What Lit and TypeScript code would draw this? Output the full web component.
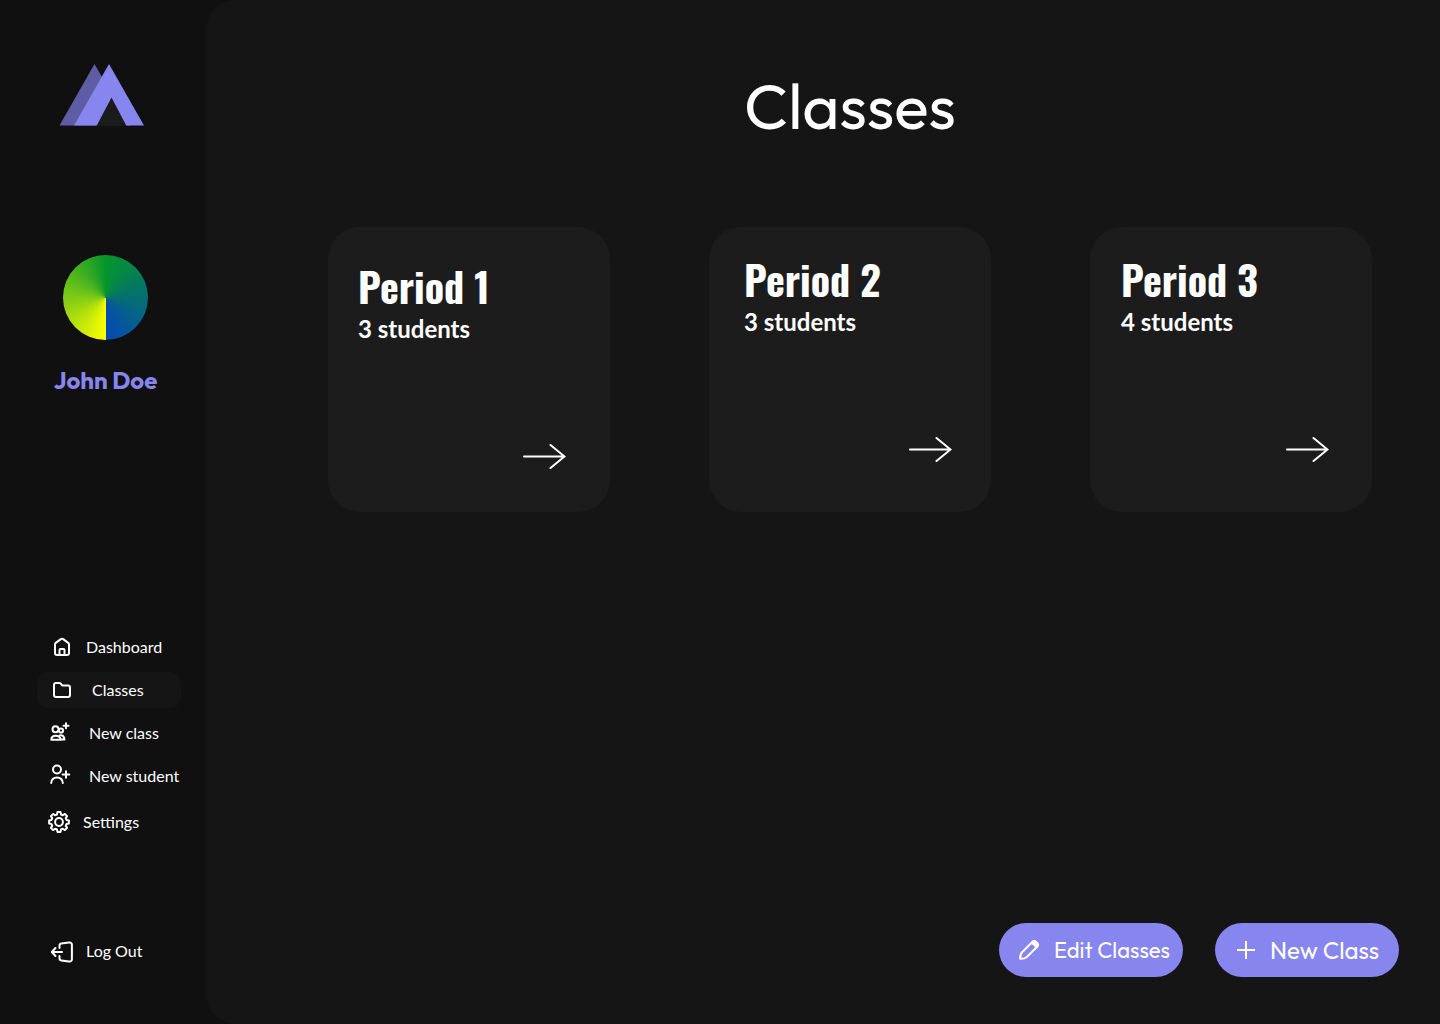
import { LitElement, html, svg, css, SVGTemplateResult } from "lit";
import { customElement, property } from "lit/decorators.js";
import { classMap } from "lit/directives/class-map.js";

/* Outline of an eight-toothed gear centred on (cx, cy). */
function gearPath(cx: number, cy: number, outer: number, inner: number): string {
  const points: string[] = [];
  const at = (deg: number, r: number) => {
    const a = (deg * Math.PI) / 180;
    return `${(cx + r * Math.sin(a)).toFixed(2)} ${(cy - r * Math.cos(a)).toFixed(2)}`;
  };
  for (let i = 0; i < 8; i++) {
    const mid = i * 45;
    points.push(at(mid - 15, inner), at(mid - 9, outer), at(mid + 9, outer), at(mid + 15, inner));
  }
  return `M${points.join("L")}Z`;
}

const icons: Record<string, SVGTemplateResult> = {
  home: svg`
    <path d="M7 10.500V19a2 2 0 0 0 2 2h10a2 2 0 0 0 2-2v-8.500q0-1-.8-1.600l-5-3.800a2 2 0 0 0-2.400 0L7.800 8.900Q7 9.500 7 10.500Z"/>
    <path d="M11.500 21v-5a1 1 0 0 1 1-1h3a1 1 0 0 1 1 1v5"/>`,
  folder: svg`
    <path d="M6 8a2 2 0 0 1 2-2h3.200a2 2 0 0 1 1.500.700l1.600 1.800h5.700a2 2 0 0 1 2 2V18a2 2 0 0 1-2 2H8a2 2 0 0 1-2-2Z"/>`,
  group: svg`
    <circle cx="7.500" cy="9.200" r="3"/>
    <circle cx="13" cy="10.500" r="2.100"/>
    <path d="M3.300 19.800q0-4 4.500-4t4.700 4Z"/>
    <path d="M11.800 15.400q4.200-.900 4.700 4.200h-3.500"/>
    <path d="M18 3.300v5M15.500 5.800h5"/>`,
  person: svg`
    <circle cx="9" cy="6.500" r="4"/>
    <path d="M3.200 20q.300-5.600 5.800-5.600t5.800 5.600"/>
    <path d="M18 8.300v6.400M14.600 11.500h6.600"/>`,
  gear: svg`
    <path d=${gearPath(11, 13, 10, 7.8)}/>
    <circle cx="11" cy="13" r="3.900"/>`,
  logout: svg`
    <path d="M11.500 10V7.700q0-1.900 1.800-2.100l7.600-1q3-.400 3 2.200v14.400q0 2.600-3 2.200l-7.600-1q-1.800-.200-1.800-2.100V18"/>
    <path d="M14 14H4M7.500 10l-3.700 4 3.700 4"/>`,
};

@customElement("nav-item")
class NavItem extends LitElement {
  @property() label = "";
  @property() icon = "home";
  @property() spacing = "normal";
  @property({ type: Boolean }) active = false;

  static styles = css`
    :host {
      display: block;
    }
    .item {
      display: flex;
      align-items: center;
      gap: 12px;
      height: 36px;
      padding-left: 11px;
      border-radius: 10px;
      color: #fff;
      font: 400 16px/20px Lato, sans-serif;
      text-decoration: none;
      white-space: nowrap;
    }
    .item.tight {
      gap: 9px;
    }
    .item.loose {
      gap: 15px;
    }
    .item.wide {
      gap: 18px;
    }
    .item.active {
      background: #151515;
    }
    .icon {
      flex: none;
      width: 26px;
      height: 26px;
      fill: none;
      stroke: #fff;
      stroke-width: 2;
      stroke-linecap: round;
      stroke-linejoin: round;
    }
  `;

  render() {
    const classes = { item: true, active: this.active, [this.spacing]: true };
    return html`
      <a class=${classMap(classes)} href="#" aria-current=${this.active ? "page" : "false"}>
        <svg class="icon" viewBox="0 0 26 26" aria-hidden="true">${icons[this.icon]}</svg>
        <span>${this.label}</span>
      </a>
    `;
  }
}

@customElement("class-card")
class ClassCard extends LitElement {
  @property() name = "";
  @property({ type: Number }) students = 0;
  @property() placement = "base";

  static styles = css`
    :host {
      display: block;
    }
    .card {
      box-sizing: border-box;
      display: flex;
      flex-direction: column;
      justify-content: space-between;
      height: 100%;
      min-height: 285px;
      padding: 23px 43px 50px 31px;
      border-radius: 32px;
      background: #1c1c1c;
      color: #fff;
    }
    .card.low {
      padding: 30px 44px 43px 30px;
    }
    .card.inset {
      padding-left: 35px;
      padding-right: 39px;
    }
    .name {
      margin: 0;
      font: 700 40px/58px Oswald, "Liberation Sans Narrow", sans-serif;
    }
    .count {
      margin: 0;
      font: 700 24px/28px Lato, sans-serif;
    }
    .open {
      align-self: flex-end;
      display: block;
      height: 26px;
    }
    .arrow {
      display: block;
      width: 44px;
      height: 26px;
      fill: none;
      stroke: #fff;
      stroke-width: 2;
      stroke-linecap: round;
    }
  `;

  render() {
    return html`
      <article class=${classMap({ card: true, [this.placement]: true })}>
        <header>
          <h2 class="name">${this.name}</h2>
          <p class="count">${this.students} students</p>
        </header>
        <a class="open" href="#" aria-label="Open ${this.name}">
          <svg class="arrow" viewBox="0 0 44 26" aria-hidden="true">
            <path d="M2 13.500H42M28.500 2l14 11.500L28.500 25" />
          </svg>
        </a>
      </article>
    `;
  }
}

@customElement("app-root")
class AppRoot extends LitElement {
  static styles = css`
    :host {
      display: block;
      background: #101010;
      color: #fff;
    }
    .layout {
      display: grid;
      grid-template-columns: 206px minmax(0, 1fr);
      min-height: 100vh;
    }
    .sidebar {
      box-sizing: border-box;
      display: flex;
      flex-direction: column;
      padding: 64px 25px 55px 37px;
    }
    .logo {
      width: 86px;
      height: 62px;
      margin-left: 22px;
    }
    .profile {
      display: flex;
      flex-direction: column;
      align-items: center;
      gap: 24px;
      margin-top: 129px;
      padding-right: 7px;
    }
    .avatar {
      width: 85px;
      height: 85px;
      border-radius: 50%;
      background: conic-gradient(#05962b, #0549b5 180deg, #fbff00 180deg, #05962b);
    }
    .user {
      margin: 0;
      color: #8785ee;
      font: 700 24px/32px Outfit, Lato, sans-serif;
      white-space: nowrap;
    }
    .nav {
      display: flex;
      flex-direction: column;
      gap: 10px;
      margin-top: 233px;
    }
    .group {
      display: flex;
      flex-direction: column;
      gap: 7px;
      margin: 0;
      padding: 0;
      list-style: none;
    }
    .logout {
      margin-top: auto;
    }
    .main {
      box-sizing: border-box;
      display: flex;
      flex-direction: column;
      padding: 66px 41px 47px 122px;
      border-radius: 30px 0 0 30px;
      background: #151515;
    }
    .title {
      margin: 0 27px 0 0;
      font: 400 64px/80px Outfit, Lato, sans-serif;
      text-align: center;
    }
    .cards {
      display: grid;
      grid-template-columns: repeat(3, minmax(0, 1fr));
      gap: 99px;
      margin: 81px 27px 0 0;
    }
    .actions {
      display: flex;
      justify-content: flex-end;
      gap: 32px;
      margin-top: auto;
    }
    .action {
      box-sizing: border-box;
      display: flex;
      align-items: center;
      gap: 13px;
      min-width: 184px;
      height: 54px;
      padding: 0 12px 0 18px;
      border: 0;
      border-radius: 27px;
      background: #8785ee;
      color: #fff;
      font: 400 22px/30px Outfit, Lato, sans-serif;
      white-space: nowrap;
      cursor: pointer;
    }
    .action.large {
      font-size: 24px;
    }
    .glyph {
      flex: none;
      width: 24px;
      height: 24px;
      fill: none;
      stroke: #fff;
      stroke-width: 2;
      stroke-linejoin: round;
    }
    .solid {
      fill: #fff;
    }
  `;

  render() {
    return html`
      <div class="layout">
        <aside class="sidebar">
          <svg class="logo" viewBox="0 0 86 62" aria-hidden="true">
            <path d="M.500 61.500 35.500 0 71 61.500Z" fill="#5e5ca2" />
            <path d="M15 61.500 50 0 85 61.500Z" fill="#8785ee" />
            <path d="M37.500 62 52.500 33.500 67.500 62Z" fill="#1b1b1b" />
          </svg>
          <div class="profile">
            <div class="avatar"></div>
            <p class="user">John Doe</p>
          </div>
          <nav class="nav">
            <ul class="group">
              <li><nav-item icon="home" label="Dashboard"></nav-item></li>
              <li><nav-item icon="folder" label="Classes" spacing="wide" active></nav-item></li>
              <li><nav-item icon="group" label="New class" spacing="loose"></nav-item></li>
              <li><nav-item icon="person" label="New student" spacing="loose"></nav-item></li>
            </ul>
            <ul class="group">
              <li><nav-item icon="gear" label="Settings" spacing="tight"></nav-item></li>
            </ul>
          </nav>
          <nav-item class="logout" icon="logout" label="Log Out"></nav-item>
        </aside>
        <main class="main">
          <h1 class="title">Classes</h1>
          <section class="cards">
            <class-card name="Period 1" students="3" placement="low"></class-card>
            <class-card name="Period 2" students="3" placement="inset"></class-card>
            <class-card name="Period 3" students="4"></class-card>
          </section>
          <div class="actions">
            <button class="action" type="button">
              <svg class="glyph" viewBox="0 0 24 24" aria-hidden="true">
                <path d="M3.200 20.800q-.300-4.300 1.900-6.600L15.600 3.700q1.500-1.300 3 0l1.800 1.800q1.300 1.500 0 3L9.800 19q-2.300 2.100-6.600 1.800Z" />
                <path class="solid" d="M14.200 5.100l1.400-1.400q1.500-1.300 3 0l1.800 1.800q1.300 1.500 0 3L19 9.900q-.600-3.600-4.800-4.800Z" />
              </svg>
              <span>Edit Classes</span>
            </button>
            <button class="action large" type="button">
              <svg class="glyph" viewBox="0 0 24 24" aria-hidden="true">
                <path d="M13 3v18M4 12h18" />
              </svg>
              <span>New Class</span>
            </button>
          </div>
        </main>
      </div>
    `;
  }
}
